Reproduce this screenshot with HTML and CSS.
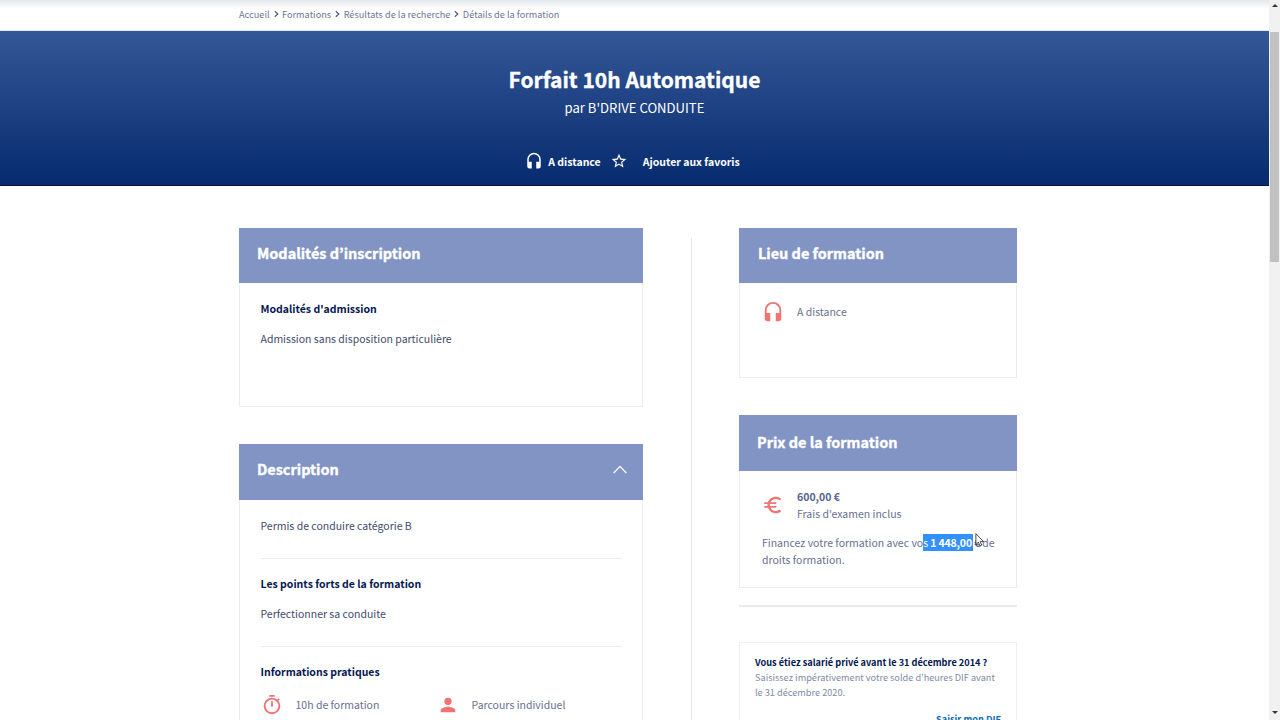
FILE: index.html
```html
<!DOCTYPE html>
<html lang="fr">
<head>
<meta charset="utf-8">
<title>Forfait 10h Automatique</title>
<link rel="stylesheet" href="styles.css">
</head>
<body>
<svg class="defs" width="0" height="0">
  <symbol id="headset" viewBox="0 0 24 24"><path d="M12 1a9 9 0 0 0-9 9v9a3 3 0 0 0 3 3h3v-9H5v-3a7 7 0 0 1 14 0v3h-4v9h3a3 3 0 0 0 3-3v-9a9 9 0 0 0-9-9z"/></symbol>
</svg>
<div class="page">
  <nav class="crumbs">
    <span>Accueil</span><svg class="sep" viewBox="0 0 5 8"><path d="M.8 1.2L3.8 4L.8 6.8"/></svg>
    <span>Formations</span><svg class="sep" viewBox="0 0 5 8"><path d="M.8 1.2L3.8 4L.8 6.8"/></svg>
    <span>Résultats de la recherche</span><svg class="sep" viewBox="0 0 5 8"><path d="M.8 1.2L3.8 4L.8 6.8"/></svg>
    <span>Détails de la formation</span>
  </nav>
  <header class="hero">
    <h1>Forfait 10h Automatique</h1>
    <p class="by">par B'DRIVE CONDUITE</p>
    <div class="actions">
      <svg class="hs" viewBox="0 0 24 24"><use href="#headset"/></svg>
      <span class="dist">A distance</span>
      <svg class="star" viewBox="1 1 22 22"><path d="M22 9.24l-7.19-.62L12 2 9.19 8.63 2 9.24l5.46 4.73L5.82 21 12 17.27 18.18 21l-1.63-7.03L22 9.24zM12 15.4l-3.76 2.27 1-4.28-3.32-2.88 4.38-.38L12 6.1l1.71 4.04 4.38.38-3.32 2.88 1 4.28L12 15.4z"/></svg>
      <span class="fav">Ajouter aux favoris</span>
    </div>
  </header>
  <main class="columns">
    <section class="left">
      <article class="card modal">
        <h2><span>Modalités d’inscription</span></h2>
        <div class="body">
          <h3>Modalités d'admission</h3>
          <p>Admission sans disposition particulière</p>
        </div>
      </article>
      <article class="card desc">
        <h2><span>Description</span><svg class="chev" viewBox="0 0 14 9"><path d="M.7 8L7 1.4L13.3 8"/></svg></h2>
        <div class="body">
          <p class="permis">Permis de conduire catégorie B</p>
          <div class="block">
            <h3>Les points forts de la formation</h3>
            <p class="perf">Perfectionner sa conduite</p>
          </div>
          <div class="block">
            <h3>Informations pratiques</h3>
            <div class="infos">
              <div class="info"><svg class="ico" viewBox="0 0 24 24"><path d="M15 1H9v2h6V1zm-4 13h2V8h-2v6zm8.03-6.61l1.42-1.42c-.43-.51-.9-.99-1.41-1.41l-1.42 1.42A8.96 8.96 0 0 0 12 4a9 9 0 1 0 7.03 3.39zM12 20a7 7 0 1 1 0-14 7 7 0 0 1 0 14z"/></svg><span>10h de formation</span></div>
              <div class="info"><svg class="ico" viewBox="0 0 24 24"><path d="M12 12a4 4 0 1 0 0-8 4 4 0 0 0 0 8zm0 2c-2.67 0-8 1.34-8 4v2h16v-2c0-2.66-5.33-4-8-4z"/></svg><span>Parcours individuel</span></div>
            </div>
          </div>
        </div>
      </article>
    </section>
    <aside class="right">
      <article class="card lieu">
        <h2><span>Lieu de formation</span></h2>
        <div class="row"><svg class="ico" viewBox="0 0 24 24"><use href="#headset"/></svg><span>A distance</span></div>
      </article>
      <article class="card prix">
        <h2><span>Prix de la formation</span></h2>
        <div class="row"><svg class="ico" viewBox="0 0 24 24"><path d="M15 18.5c-2.51 0-4.68-1.42-5.76-3.5H15l1-2H8.58c-.05-.33-.08-.66-.08-1s.03-.67.08-1H15l1-2H9.24C10.32 6.92 12.5 5.5 15 5.5c1.61 0 3.09.59 4.23 1.57L21 5.3C19.41 3.87 17.3 3 15 3c-3.92 0-7.24 2.51-8.48 6H3l-1 2h4.06a8.3 8.3 0 0 0 0 2H3l-1 2h4.52c1.24 3.49 4.56 6 8.48 6 2.31 0 4.41-.87 6-2.3l-1.78-1.77A6.45 6.45 0 0 1 15 18.5z"/></svg>
          <div><p><b>600,00 €</b></p><p>Frais d'examen inclus</p></div></div>
        <div class="fund">
          <p class="fund-line"><span>Financez votre formation avec vo</span><span class="sel">s <b>1 448,00 </b></span><span class="rest"><b>€</b> de</span>
            <svg class="cursor" viewBox="0 0 12 17"><path d="M1 .8V14l3-2.8 2 4.5 2.2-1-2-4.2h4.2z"/></svg></p>
          <p>droits formation.</p>
        </div>
      </article>
      <hr>
      <article class="dif">
        <h4>Vous étiez salarié privé avant le 31 décembre 2014 ?</h4>
        <p>Saisissez impérativement votre solde d’heures DIF avant</p>
        <p>le 31 décembre 2020.</p>
        <a>Saisir mon DIF</a>
      </article>
    </aside>
  </main>
</div>
<div class="scrollbar">
  <svg class="arrow" viewBox="0 0 6 3"><path d="M0 3L3 0L6 3z"/></svg>
  <div class="thumb"></div>
  <svg class="arrow" viewBox="0 0 6 3"><path d="M0 0L3 3L6 0z"/></svg>
</div>
</body>
</html>
```
FILE: styles.css
```css
* { box-sizing: border-box; margin: 0; padding: 0; }
body { width: 1280px; height: 720px; overflow: hidden; display: flex; background: #fff; color: #424c6b; font-family: "Noto Sans CJK KR", "Noto Sans", sans-serif; font-size: 10.5px; line-height: 17px; }
p, h1, h2, h3, h4, span { white-space: nowrap; }
.defs { position: absolute; }
.page { width: 1269px; height: 720px; overflow: hidden; }
.crumbs { height: 31px; padding: 6px 0 0 239px; display: flex; align-items: flex-start; font-size: 9.2px; color: #6c7594; background: linear-gradient(#e3e8eb, #fff 9px); border-bottom: 1px solid #dfe6f4; }
.sep { width: 5px; height: 8px; margin: 4px 3.5px 0 4px; fill: none; stroke: #4f5a80; stroke-width: 1.2; }
.hero { height: 155px; padding-top: 33px; background: linear-gradient(#345797, #062b6e); border-bottom: 1px solid #02103f; color: #fff; display: flex; flex-direction: column; align-items: center; }
h1 { font-size: 21px; line-height: 30px; -webkit-text-stroke: .35px #fff; }
.by { font-size: 13.1px; line-height: 20px; margin-top: 4px; }
.actions { display: flex; align-items: center; margin-top: 34px; padding-right: 4px; height: 18px; font-weight: 700; font-size: 10.5px; }
.star { width: 16px; height: 16px; fill: #fff; }
.hs { width: 18px; height: 18px; margin-top: -1px; fill: #fff; }
.dist { margin-left: 5px; margin-right: 10px; }
.fav { margin-left: 16px; }
.columns { display: flex; padding: 42px 0 0 239px; height: 534px; }
.left { width: 404px; margin-right: 48px; }
.card { border: 1px solid #ebedf1; }
.card h2 { margin: -1px -1px 0; height: 56px; padding: 0 16px 8px 18px; display: flex; align-items: center; justify-content: space-between; background: #8294c4; color: #fff; font-size: 14.45px; -webkit-text-stroke: .35px #fff; }
.body { padding: 17px 21px 0 20.5px; }
h3 { font-size: 10.5px; color: #031751; }
.card.modal h2, .card.lieu h2 { height: 55px; padding-bottom: 7px; }
.card.lieu h2 { padding-left: 19px; }
.modal { height: 179px; margin-bottom: 37px; }
.modal .body p { margin-top: 13px; }
.desc { height: 400px; }
.chev { width: 14px; height: 9px; margin-top: 3px; fill: none; stroke: #fff; stroke-width: 1.3; }
.block { border-top: 1px solid #ebebed; padding-top: 16px; }
.permis { margin-bottom: 24px; }
.perf { margin: 13px 0 24px; }
.infos { display: flex; margin-top: 13px; color: #68718f; }
.info { width: 176px; height: 24px; display: flex; align-items: center; }
.info span { margin-top: -2px; }
.ico { width: 22px; height: 22px; fill: #ee7476; flex: none; margin-right: 13px; }
.right { width: 326px; padding-left: 48px; position: relative; }
.right::before { content: ""; position: absolute; left: 0; top: 10px; width: 1px; height: 482px; background: #e5e5e8; }
.right .card { color: #68718f; }
.lieu { height: 150px; margin-bottom: 37px; }
.row { display: flex; align-items: center; padding: 18px 0 0 22px; }
.lieu .row span { margin-top: -1px; }
.prix { height: 173px; }
.card.prix h2 { padding-bottom: 3px; }
.prix .row { padding-top: 17px; }
.prix b { color: #56648e; }
.fund { padding: 12px 0 0 22px; }
.fund-line { display: flex; position: relative; }
.sel { background: #3390ff; color: #fff; width: 50px; white-space: pre; letter-spacing: -.15px; }
.prix .sel b { color: #fff; }
.rest { margin-left: 1px; letter-spacing: -.2px; }
.cursor { position: absolute; left: 213px; top: -1px; width: 10px; height: 14px; fill: #fff; stroke: #222; stroke-width: 1; }
hr { border: 0; height: 2px; margin-top: 17px; background: #e8eaed; }
.dif { height: 100px; margin-top: 35px; border: 1px solid #eff0f3; padding: 12px 15px; font-size: 9.2px; line-height: 15px; color: #818aa4; display: flex; flex-direction: column; align-items: flex-start; }
.dif h4 { font-size: 9.2px; color: #031751; }
.dif a { align-self: flex-end; margin-top: 12px; font-weight: 700; color: #0f6aad; }
.scrollbar { width: 11px; height: 720px; background: #f1f1f1; display: flex; flex-direction: column; align-items: center; padding-top: 4px; }
.arrow { width: 6px; height: 3px; fill: #333; }
.thumb { width: 9px; height: 230px; margin: 25px 0 449px; background: #c1c1c1; flex: none; }
```
